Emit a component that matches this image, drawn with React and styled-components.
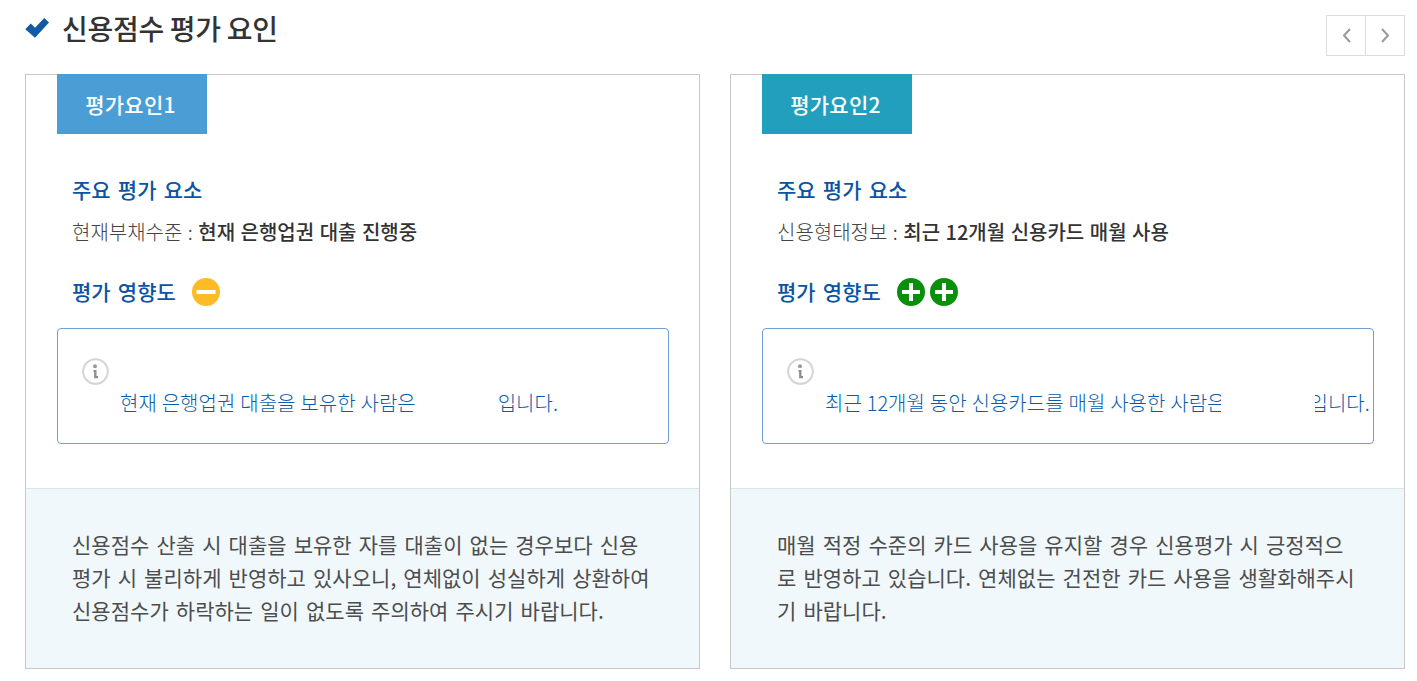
import React from "react";
import styled, { createGlobalStyle } from "styled-components";

const GlobalStyle = createGlobalStyle`
  html, body {
    margin: 0;
    padding: 0;
    background: #fff;
    font-family: "Noto Sans CJK KR", "Noto Sans", sans-serif;
  }
`;

const factors = [
  {
    tag: "평가요인1",
    tagColor: "#4b9dd6",
    label: "현재부채수준",
    value: "현재 은행업권 대출 진행중",
    impact: ["minus"],
    before: "현재 은행업권 대출을 보유한 사람은",
    after: "입니다.",
    maskWidth: 82,
    maskShift: 0,
    desc: "신용점수 산출 시 대출을 보유한 자를 대출이 없는 경우보다 신용평가 시 불리하게 반영하고 있사오니, 연체없이 성실하게 상환하여 신용점수가 하락하는 일이 없도록 주의하여 주시기 바랍니다.",
  },
  {
    tag: "평가요인2",
    tagColor: "#239fbe",
    label: "신용형태정보",
    value: "최근 12개월 신용카드 매월 사용",
    impact: ["plus", "plus"],
    before: "최근 12개월 동안 신용카드를 매월 사용한 사람은",
    after: "입니다.",
    maskWidth: 94,
    maskShift: 5,
    desc: "매월 적정 수준의 카드 사용을 유지할 경우 신용평가 시 긍정적으로 반영하고 있습니다. 연체없는 건전한 카드 사용을 생활화해주시기 바랍니다.",
  },
];

function CheckIcon() {
  return (
    <svg width="24" height="20" viewBox="0 0 24 20">
      <path d="M0.3 11.2L5.7 5.5L10 9.8L19.3 0L24 4.5L10 19.8Z" fill="#0f59a6" />
    </svg>
  );
}

function Chevron({ dir }) {
  return (
    <svg width="9" height="15" viewBox="0 0 9 15">
      <path
        d={dir === "left" ? "M8 1L2 7.5L8 14" : "M1 1L7 7.5L1 14"}
        fill="none"
        stroke="#999"
        strokeWidth="2"
      />
    </svg>
  );
}

function ImpactIcon({ type }) {
  const minus = type === "minus";
  return (
    <svg width="28" height="28" viewBox="0 0 28 28">
      <circle cx="14" cy="14" r="14" fill={minus ? "#fdbc25" : "#0a8f0a"} />
      <path
        d={minus ? "M4.5 14H23.5" : "M5 14H23M14 5V23"}
        stroke="#fff"
        strokeWidth="4"
      />
    </svg>
  );
}

function InfoIcon() {
  return (
    <svg width="27" height="27" viewBox="0 0 27 27">
      <circle cx="13.5" cy="13.5" r="12.3" fill="#fff" stroke="#d4d4d4" strokeWidth="2" />
      <circle cx="13" cy="8.3" r="2" fill="#9a9a9a" />
      <path d="M11.5 12H14.5V18H16V20.3H12.1V13.9H11.5Z" fill="#8f8f8f" />
    </svg>
  );
}

export default function App() {
  return (
    <Page>
      <GlobalStyle />
      <Header>
        <Title>
          <CheckIcon />
          신용점수 평가 요인
        </Title>
        <Pager>
          <PagerButton aria-label="이전">
            <Chevron dir="left" />
          </PagerButton>
          <PagerButton aria-label="다음">
            <Chevron dir="right" />
          </PagerButton>
        </Pager>
      </Header>
      <Cards>
        {factors.map((f) => (
          <Card key={f.tag}>
            <Main>
              <Tag $color={f.tagColor}>{f.tag}</Tag>
              <SubHeading>주요 평가 요소</SubHeading>
              <Element>
                {f.label} : <strong>{f.value}</strong>
              </Element>
              <ImpactRow>
                <SubHeading as="span">평가 영향도</SubHeading>
                <Icons>
                  {f.impact.map((t, i) => (
                    <ImpactIcon key={i} type={t} />
                  ))}
                </Icons>
              </ImpactRow>
              <InfoBox>
                <InfoIcon />
                <InfoText>
                  {f.before}
                  <Mask $width={f.maskWidth} $shift={f.maskShift} />
                  {f.after}
                </InfoText>
              </InfoBox>
            </Main>
            <Desc>{f.desc}</Desc>
          </Card>
        ))}
      </Cards>
    </Page>
  );
}

const Page = styled.div`
  width: 1417px;
  height: 681px;
  box-sizing: border-box;
  padding: 0 12px 0 25px;
  overflow: hidden;
`;

const Header = styled.header`
  height: 74px;
  display: flex;
  justify-content: space-between;
  align-items: flex-start;
`;

const Title = styled.h2`
  margin: 7px 0 0;
  display: flex;
  align-items: center;
  gap: 13px;
  font-size: 28px;
  line-height: 42px;
  font-weight: 500;
  letter-spacing: -0.3px;
  color: #333;
`;

const Pager = styled.div`
  margin-top: 15px;
  display: flex;
`;

const PagerButton = styled.button`
  width: 40px;
  height: 41px;
  padding: 0;
  display: flex;
  align-items: center;
  justify-content: center;
  background: #fff;
  border: 1px solid #dcdcdc;
  & + & {
    margin-left: -1px;
  }
`;

const Cards = styled.div`
  display: grid;
  grid-template-columns: 675px 675px;
  gap: 30px;
`;

const Card = styled.section`
  height: 595px;
  box-sizing: border-box;
  border: 1px solid #c8c8c8;
  display: flex;
  flex-direction: column;
`;

const Main = styled.div`
  flex: 1;
  padding: 0 30px 0 31px;
`;

const Tag = styled.div`
  width: 150px;
  height: 60px;
  box-sizing: border-box;
  padding-right: 3px;
  margin-top: -1px;
  margin-bottom: 37px;
  display: flex;
  align-items: center;
  justify-content: center;
  background: ${(p) => p.$color};
  color: #fff;
  font-size: 21px;
  font-weight: 500;
  letter-spacing: 0.3px;
`;

const SubHeading = styled.h3`
  margin: 0 0 0 15px;
  font-size: 21px;
  line-height: 36px;
  font-weight: 500;
  word-spacing: 2.5px;
  color: #0a55a3;
`;

const Element = styled.p`
  margin: 9px 0 0 15px;
  font-size: 20px;
  line-height: 32px;
  font-weight: 300;
  word-spacing: 1px;
  color: #444;
  strong {
    font-weight: 500;
    color: #333;
  }
`;

const ImpactRow = styled.div`
  margin-top: 25px;
  height: 36px;
  display: flex;
  align-items: center;
  gap: 16px;
`;

const Icons = styled.div`
  display: flex;
  gap: 5px;
  margin-top: 2px;
  svg {
    display: block;
  }
`;

const InfoBox = styled.div`
  margin-top: 19px;
  width: 612px;
  height: 116px;
  box-sizing: border-box;
  border: 1px solid #6f9fd3;
  border-radius: 4px;
  padding: 29px 0 0 24px;
  svg {
    display: block;
  }
`;

const InfoText = styled.p`
  margin: 2px 0 0 38px;
  font-size: 20px;
  line-height: 32px;
  font-weight: 300;
  word-spacing: 0.5px;
  color: #0a5cab;
  white-space: nowrap;
`;

const Mask = styled.span`
  display: inline-block;
  width: ${(p) => p.$width}px;
  height: 30px;
  margin-left: -${(p) => p.$shift}px;
  margin-right: -${(p) => p.$shift}px;
  background: #fff;
  position: relative;
  vertical-align: middle;
`;

const Desc = styled.p`
  margin: 0;
  height: 180px;
  box-sizing: border-box;
  padding: 39px 44px 0 46px;
  background: #f0f8fc;
  border-top: 1px solid #d6e4ef;
  font-size: 21px;
  line-height: 33px;
  font-weight: 400;
  letter-spacing: 0.03px;
  word-spacing: 2.3px;
  color: #4d4d4d;
  word-break: break-all;
`;
